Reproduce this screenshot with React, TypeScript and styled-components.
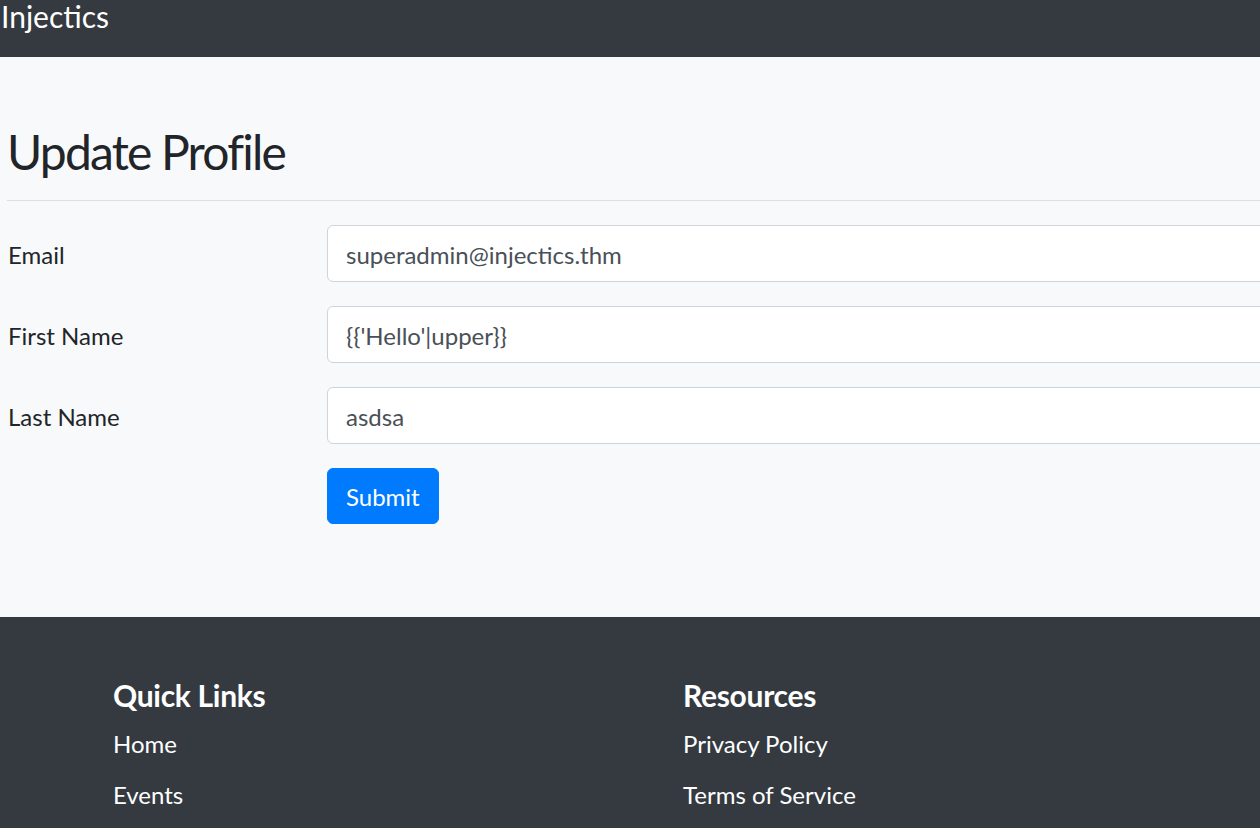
import React from "react";
import styled, { createGlobalStyle } from "styled-components";

const GlobalStyle = createGlobalStyle`
  html, body {
    margin: 0;
    padding: 0;
    overflow: hidden;
    background: #343a40;
  }
  body {
    font-family: "Lato", "Open Sans", sans-serif;
    color: #212529;
  }
  * { box-sizing: border-box; }
`;

const Navbar = styled.nav`
  height: 57px;
  background: #343a40;
  padding: 1px 0 0 1px;
`;

const Brand = styled.a`
  display: inline-block;
  color: #ffffff;
  font-size: 30px;
  line-height: 1;
  text-decoration: none;
`;

const Main = styled.main`
  background: #f8f9fa;
  padding: 66px 0 93px 7px;
  overflow: hidden;
`;

const Title = styled.h2`
  margin: 0 0 19px;
  font-size: 48px;
  font-weight: 400;
  line-height: 1.2;
  letter-spacing: -1.8px;
  color: #212529;
`;

const Divider = styled.hr`
  margin: 0 0 24px;
  border: 0;
  border-top: 1px solid #dfe0e2;
`;

const Form = styled.form`
  display: grid;
  grid-template-columns: 320px 1000px;
  row-gap: 24px;
  align-items: center;
`;

const Label = styled.label`
  font-size: 24px;
  line-height: 1.5;
  color: #212529;
  padding: 4px 0 0 1px;
`;

const Input = styled.input`
  height: 57px;
  width: 100%;
  padding: 3px 18px 0;
  font-family: inherit;
  font-size: 24px;
  color: #495057;
  background: #ffffff;
  border: 1px solid #ced4da;
  border-radius: 6px;
  outline: none;
`;

const Submit = styled.button`
  grid-column: 2;
  justify-self: start;
  height: 56px;
  padding: 2px 18px 0;
  font-family: inherit;
  font-size: 24px;
  color: #ffffff;
  background: #007bff;
  border: 1px solid #007bff;
  border-radius: 6px;
`;

const Footer = styled.footer`
  background: #343a40;
  padding: 60px 0 0 113px;
  display: grid;
  grid-template-columns: 570px 570px;
  height: 211px;
`;

const Column = styled.div`
  display: flex;
  flex-direction: column;
`;

const ColumnTitle = styled.h5`
  margin: 0 0 13px;
  font-size: 30px;
  font-weight: 700;
  line-height: 1.2;
  letter-spacing: -0.3px;
  color: #ffffff;
`;

const LinkList = styled.ul`
  list-style: none;
  margin: 0;
  padding: 0;
`;

const LinkItem = styled.li`
  margin-bottom: 15px;
`;

const FooterLink = styled.a`
  color: #ffffff;
  font-size: 24px;
  line-height: 1.5;
  text-decoration: none;
`;

const fields = [
  { id: "email", label: "Email", value: "superadmin@injectics.thm" },
  { id: "fname", label: "First Name", value: "{{'Hello'|upper}}" },
  { id: "lname", label: "Last Name", value: "asdsa" },
];

const footerCols = [
  { title: "Quick Links", links: ["Home", "Events"] },
  { title: "Resources", links: ["Privacy Policy", "Terms of Service"] },
];

export default function App() {
  return (
    <>
      <GlobalStyle />
      <Navbar>
        <Brand href="#">Injectics</Brand>
      </Navbar>
      <Main>
        <Title>Update Profile</Title>
        <Divider />
        <Form onSubmit={(e) => e.preventDefault()}>
          {fields.map((f) => (
            <React.Fragment key={f.id}>
              <Label htmlFor={f.id}>{f.label}</Label>
              <Input id={f.id} defaultValue={f.value} />
            </React.Fragment>
          ))}
          <Submit type="submit">Submit</Submit>
        </Form>
      </Main>
      <Footer>
        {footerCols.map((c) => (
          <Column key={c.title}>
            <ColumnTitle>{c.title}</ColumnTitle>
            <LinkList>
              {c.links.map((l) => (
                <LinkItem key={l}>
                  <FooterLink href="#">{l}</FooterLink>
                </LinkItem>
              ))}
            </LinkList>
          </Column>
        ))}
      </Footer>
    </>
  );
}
